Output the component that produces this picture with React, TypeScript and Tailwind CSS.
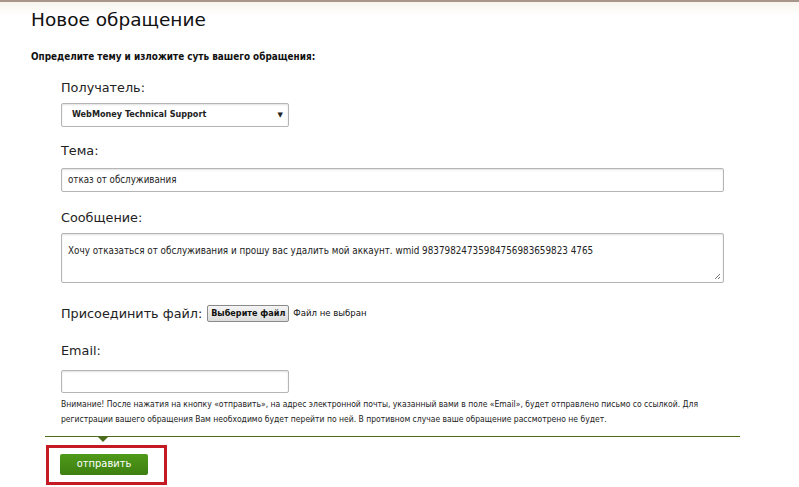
import React from "react";

const label = "text-[12.8px] text-[#222] leading-[16px] h-[16px]";
const field = "border border-[#b5b5b5] rounded-[2px] bg-white shadow-[inset_0_1px_2px_rgba(0,0,0,0.12)]";
const narrow = { fontFamily: "'DejaVu Sans Condensed', 'DejaVu Sans', sans-serif" };

const App = () => {
  return (
    <div
      className="w-[799px] h-[487px] bg-white overflow-hidden"
      style={{ fontFamily: "'DejaVu Sans', Verdana, sans-serif" }}
    >
      <div className="border-t-2 border-[#a8968c] bg-gradient-to-b from-[#f8f5ef] to-white h-[16px]" />
      <div className="pl-[31px]">
        <h1 className="text-[18.5px] leading-[20px] h-[20px] text-[#111] -mt-[6px]">Новое обращение</h1>
        <p className="mt-[21px] text-[9.9px] font-bold text-[#111] leading-[12px] h-[12px]" style={narrow}>
          Определите тему и изложите суть вашего обращения:
        </p>
      </div>

      <div className="pl-[61px] pr-[75px]">
        <div className={label + " mt-[17px]"}>Получатель:</div>
        <div className={field + " mt-[7px] w-[228px] h-[24px] flex items-center justify-between pl-[10px] pr-[5px]"}>
          <span className="text-[9px] font-bold text-[#222]" style={narrow}>WebMoney Technical Support</span>
          <span className="text-[7px] text-[#222]">▼</span>
        </div>

        <div className={label + " mt-[16px]"}>Тема:</div>
        <div className={field + " mt-[9px] h-[24px] flex items-center pl-[6px]"}>
          <span className="text-[9.7px] text-[#222]" style={narrow}>отказ от обслуживания</span>
        </div>

        <div className={label + " mt-[18px]"}>Сообщение:</div>
        <div className={field + " mt-[7px] h-[50px] relative pl-[6px] pt-[3px]"}>
          <span className="text-[9.8px] text-[#222] leading-none whitespace-nowrap" style={narrow}>
            Хочу отказаться от обслуживания и прошу вас удалить мой аккаунт. wmid 98379824735984756983659823 4765
          </span>
          <svg className="absolute right-[2px] bottom-[2px]" width="7" height="7" viewBox="0 0 7 7">
            <path d="M6 1L1 6M6 4L4 6" stroke="#777" strokeWidth="1" />
          </svg>
        </div>

        <div className="mt-[22px] flex items-center h-[17px]">
          <span className={label}>Присоединить файл:</span>
          <span
            className="ml-[5px] w-[82px] h-[17px] border border-[#8a8a8a] bg-gradient-to-b from-[#f4f4f4] to-[#dcdcdc] rounded-[2px] flex items-center justify-center text-[9px] font-bold text-[#111]"
            style={narrow}
          >
            Выберите файл
          </span>
          <span className="ml-[4px] text-[9.5px] text-[#111]" style={narrow}>Файл не выбран</span>
        </div>

        <div className={label + " mt-[21px]"}>Email:</div>
        <div className={field + " mt-[11px] w-[228px] h-[23px]"} />

        <p className="mt-[4px] text-[8.5px] leading-[15px] text-[#222] whitespace-nowrap" style={narrow}>
          Внимание! После нажатия на кнопку «отправить», на адрес электронной почты, указанный вами в поле «Email», будет отправлено письмо со ссылкой. Для
          <br />
          регистрации вашего обращения Вам необходимо будет перейти по ней. В противном случае ваше обращение рассмотрено не будет.
        </p>
      </div>

      <div className="ml-[45px] w-[695px] mt-[9px] border-t border-[#4d6b1c] relative">
        <div className="absolute left-[53px] top-0 w-0 h-0 border-l-[5px] border-r-[5px] border-t-[5px] border-l-transparent border-r-transparent border-t-[#4d6b1c]" />
      </div>

      <div className="ml-[46px] mt-[8px] w-[121px] h-[40px] border-[3px] border-[#c41a24] pl-[11px] pt-[6px]">
        <div
          className="w-[88px] h-[21px] bg-gradient-to-b from-[#4f9a1a] to-[#3d7f10] rounded-[2px] flex items-center justify-center text-white text-[11px]"
          style={narrow}
        >
          отправить
        </div>
      </div>
    </div>
  );
};

export default App;
